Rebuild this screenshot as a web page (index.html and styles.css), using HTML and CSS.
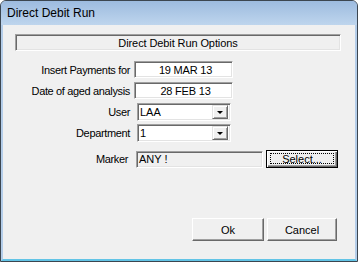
FILE: index.html
```html
<!DOCTYPE html>
<html lang="en">
<head>
  <meta charset="UTF-8" />
  <meta name="viewport" content="width=device-width, initial-scale=1.0"/>
  <link rel="stylesheet" href="styles.css">
</head>
<body>

  <div class="window">
    <div class="title-bar">Direct Debit Run</div>

    <div class="client">
      <div class="panel-caption">Direct Debit Run Options</div>

      <div class="form">
        <div class="row row-date1">
          <span class="field-label">Insert Payments for</span>
          <div class="edit">19 MAR 13</div>
        </div>
        <div class="row row-date2">
          <span class="field-label">Date of aged analysis</span>
          <div class="edit">28 FEB 13</div>
        </div>
        <div class="row row-user">
          <span class="field-label">User</span>
          <div class="combo">
            <span class="combo-text">LAA</span>
            <span class="combo-btn"><span class="arrow"></span></span>
          </div>
        </div>
        <div class="row row-dept">
          <span class="field-label">Department</span>
          <div class="combo">
            <span class="combo-text">1</span>
            <span class="combo-btn"><span class="arrow"></span></span>
          </div>
        </div>
        <div class="row row-marker">
          <span class="field-label">Marker</span>
          <div class="marker-field">ANY !</div>
          <button class="select-btn"><span class="focus-rect">Select...</span></button>
        </div>
      </div>

      <div class="buttons">
        <button class="btn btn-ok">Ok</button>
        <button class="btn btn-cancel">Cancel</button>
      </div>
    </div>
  </div>

</body>
</html>
```

FILE: styles.css
```css
body {
  margin: 0;
  padding: 0;
  width: 358px;
  height: 262px;
  overflow: hidden;
  background: #ffffff;
  font-family: 'Liberation Sans', Arial, sans-serif;
  font-size: 11px;
  color: #000;
}

/* WINDOW FRAME */
.window {
  box-sizing: border-box;
  width: 358px;
  height: 262px;
  border: 1px solid #3c4650;
  border-radius: 6px 6px 0 0;
  background: #b4cde9;
  display: flex;
  flex-direction: column;
  padding: 0 2px 0 2px;
}

.title-bar {
  height: 24px;
  flex: none;
  margin: 0 -2px;
  padding-left: 6px;
  border-radius: 5px 5px 0 0;
  background: linear-gradient(#9dbbdf, #bed5ed);
  display: flex;
  align-items: center;
  font-size: 12px;
  color: #000;
}

.client {
  flex: 1;
  display: flex;
  flex-direction: column;
  background: #f0f0f0;
  padding: 9px 14px 18px 12px;
  border-bottom: 2px solid #62c4e6;
  margin: 0 -2px;
  border-left: 2px solid #b4cde9;
  border-right: 2px solid #b4cde9;
  box-sizing: border-box;
}

/* SUNKEN CAPTION PANEL */
.panel-caption {
  box-sizing: border-box;
  height: 17px;
  border: 1px solid;
  border-color: #a0a0a0 #ffffff #ffffff #a0a0a0;
  box-shadow: inset 1px 1px 0 #696969, inset -1px -1px 0 #e3e3e3;
  display: flex;
  align-items: center;
  justify-content: center;
  letter-spacing: -0.1px;
}

/* FORM ROWS */
.form {
  margin-top: 10px;
  display: flex;
  flex-direction: column;
}

.row {
  display: flex;
  align-items: center;
}

.field-label {
  width: 115px;
  text-align: right;
  margin-right: 4px;
  flex: none;
  white-space: nowrap;
  letter-spacing: -0.35px;
}

.row-date1 { height: 17px; margin-bottom: 4px; }
.row-date2 { height: 17px; margin-bottom: 4px; }
.row-user  { height: 18px; margin-bottom: 3px; }
.row-dept  { height: 18px; margin-bottom: 8px; }
.row-marker { height: 18px; }

.edit {
  box-sizing: border-box;
  width: 99px;
  height: 17px;
  background: #fff;
  border: 1px solid;
  border-color: #a0a0a0 #ffffff #ffffff #a0a0a0;
  box-shadow: inset 1px 1px 0 #696969, inset -1px -1px 0 #e3e3e3;
  display: flex;
  align-items: center;
  justify-content: center;
  padding-left: 4px;
  letter-spacing: -0.2px;
}

.combo {
  box-sizing: border-box;
  width: 94px;
  height: 18px;
  margin-left: 3px;
  background: #fff;
  border: 1px solid;
  border-color: #a0a0a0 #ffffff #ffffff #a0a0a0;
  box-shadow: inset 1px 1px 0 #696969, inset -1px -1px 0 #e3e3e3;
  padding: 2px;
  display: flex;
  align-items: center;
}

.combo-text {
  flex: 1;
}

.combo-btn {
  box-sizing: border-box;
  width: 16px;
  height: 14px;
  background: #f0f0f0;
  border: 1px solid;
  border-color: #e3e3e3 #696969 #696969 #e3e3e3;
  box-shadow: inset 1px 1px 0 #fff, inset -1px -1px 0 #a0a0a0;
  display: flex;
  align-items: center;
  justify-content: center;
}

.arrow {
  width: 0;
  height: 0;
  border-left: 3px solid transparent;
  border-right: 3px solid transparent;
  border-top: 3px solid #000;
  margin-top: 1px;
}

.row-marker .field-label {
  width: 113px;
  margin-right: 8px;
}

.marker-field {
  box-sizing: border-box;
  width: 127px;
  height: 17px;
  background: #f0f0f0;
  border: 1px solid;
  border-color: #a0a0a0 #ffffff #ffffff #a0a0a0;
  box-shadow: inset 1px 1px 0 #696969, inset -1px -1px 0 #e3e3e3;
  display: flex;
  align-items: center;
  padding-left: 2px;
}

.select-btn {
  box-sizing: border-box;
  width: 72px;
  height: 18px;
  margin-left: 3px;
  padding: 0;
  background: #f0f0f0;
  border: 1px solid #000;
  box-shadow: inset 1px 1px 0 #fff, inset -1px -1px 0 #696969, inset -2px -2px 0 #a0a0a0;
  font-family: 'Liberation Sans', Arial, sans-serif;
  font-size: 11px;
  color: #000;
  display: flex;
  align-items: stretch;
}

.focus-rect {
  flex: 1;
  margin: 2px 3px 3px 3px;
  border: 1px dotted #000;
  display: flex;
  align-items: center;
  justify-content: center;
}

/* DIALOG BUTTONS */
.buttons {
  margin-top: auto;
  display: flex;
  justify-content: flex-end;
  gap: 3px;
  padding-right: 4px;
}

.btn {
  box-sizing: border-box;
  height: 23px;
  padding: 0;
  background: #f0f0f0;
  border: 1px solid;
  border-color: #fff #696969 #696969 #fff;
  box-shadow: inset -1px -1px 0 #a0a0a0;
  font-family: 'Liberation Sans', Arial, sans-serif;
  font-size: 11px;
  color: #000;
}

.btn-ok { width: 72px; }
.btn-cancel { width: 70px; }
```
